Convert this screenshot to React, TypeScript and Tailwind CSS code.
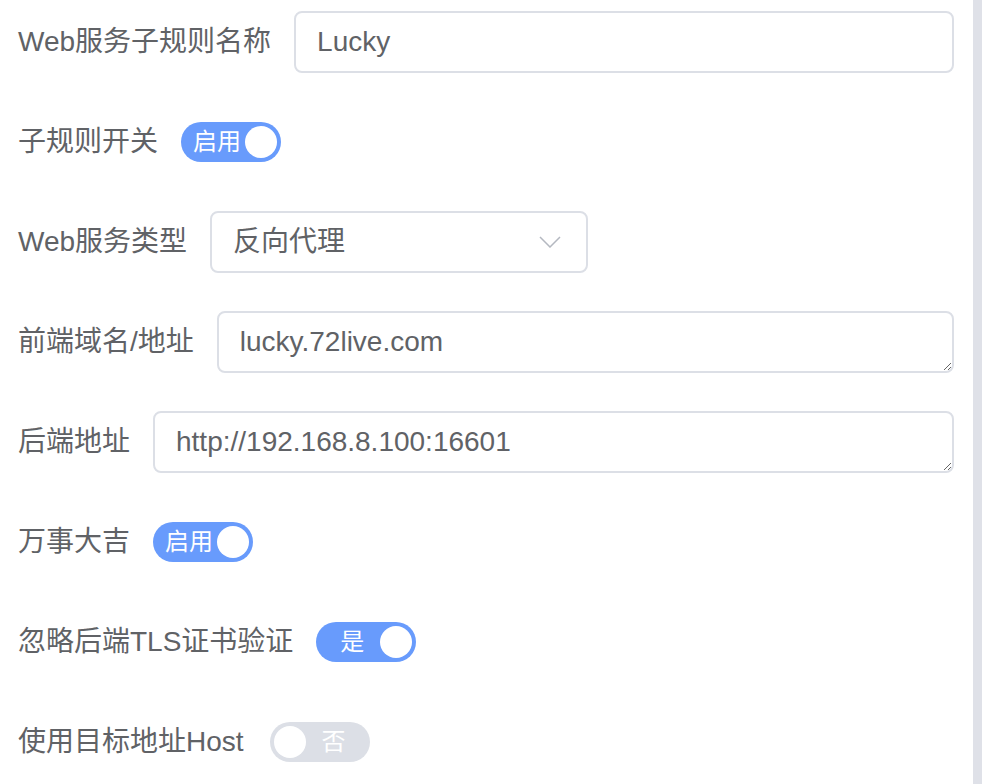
import React from "react";

const font = {
  fontFamily: '"Liberation Sans", "Noto Sans CJK SC", sans-serif',
};

function Switch({ on, text, offset, extra = "" }: { on: boolean; text: string; offset: string; extra?: string }) {
  return (
    <div
      className={
        "relative flex h-[40px] w-[100px] shrink-0 items-center rounded-full " +
        (on ? "bg-[#689bfc] " : "bg-[#dcdfe6] ") +
        extra
      }
    >
      {on ? (
        <>
          <span className={offset + " text-[24px] leading-none text-white"}>{text}</span>
          <span className="absolute right-[4px] top-[4px] h-[32px] w-[32px] rounded-full bg-white" />
        </>
      ) : (
        <>
          <span className="absolute left-[4px] top-[4px] h-[32px] w-[32px] rounded-full bg-white" />
          <span className={offset + " text-[24px] leading-none text-white"}>{text}</span>
        </>
      )}
    </div>
  );
}

function Row({ label, children }: { label: string; children: React.ReactNode }) {
  return (
    <div className="flex h-[62px] items-center">
      <div className="shrink-0 pr-[23px] text-[28px] text-[#606266]">{label}</div>
      {children}
    </div>
  );
}

const fieldCls =
  "h-[62px] rounded-[8px] border-2 border-[#dcdfe6] bg-white px-[21px] text-[28px] text-[#606266] outline-none";

export default function App() {
  return (
    <div className="flex h-[784px] w-[982px] overflow-hidden bg-white" style={font}>
      <div className="flex flex-1 flex-col gap-[38px] pl-[18px] pr-[19px] pt-[11px]">
        <Row label="Web服务子规则名称">
          <input className={fieldCls + " flex-1"} defaultValue="Lucky" style={font} />
        </Row>
        <Row label="子规则开关">
          <Switch on text="启用" offset="ml-[12px]" />
        </Row>
        <Row label="Web服务类型">
          <div className={fieldCls + " flex w-[378px] items-center justify-between"}>
            <span>反向代理</span>
            <svg width="22" height="12" viewBox="0 0 22 12" className="mr-[4px]">
              <path d="M1 1 L11 11 L21 1" fill="none" stroke="#b4b8c0" strokeWidth="1.5" />
            </svg>
          </div>
        </Row>
        <Row label="前端域名/地址">
          <textarea
            className={fieldCls + " flex-1 resize-y py-[10px] leading-[38px]"}
            defaultValue="lucky.72live.com"
            rows={1}
            style={font}
          />
        </Row>
        <Row label="后端地址">
          <textarea
            className={fieldCls + " flex-1 resize-y py-[10px] leading-[38px]"}
            defaultValue="http://192.168.8.100:16601"
            rows={1}
            style={font}
          />
        </Row>
        <Row label="万事大吉">
          <Switch on text="启用" offset="ml-[12px]" />
        </Row>
        <Row label="忽略后端TLS证书验证">
          <Switch on text="是" offset="ml-[24px]" />
        </Row>
        <Row label="使用目标地址Host">
          <Switch on={false} text="否" offset="ml-[52px]" extra="ml-[3px]" />
        </Row>
      </div>
      <div className="h-full w-[9px] shrink-0 bg-[#dfe1e8]" />
    </div>
  );
}
